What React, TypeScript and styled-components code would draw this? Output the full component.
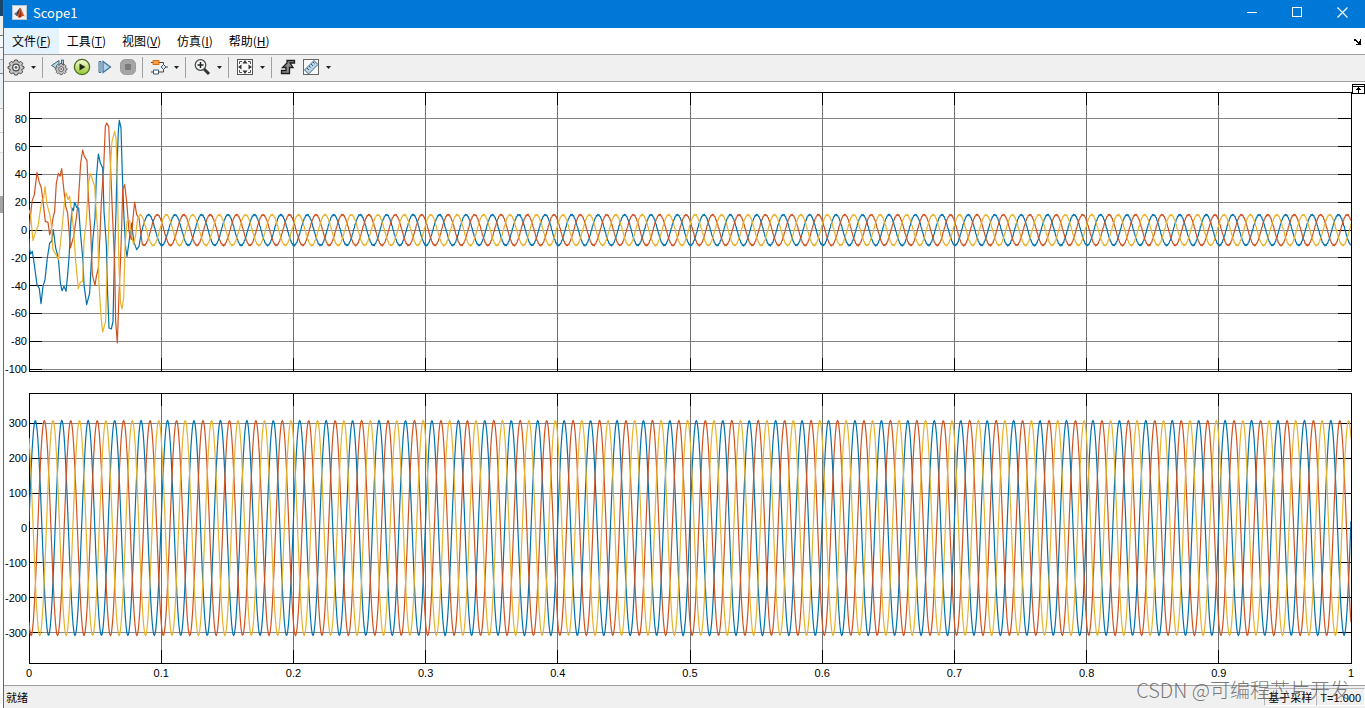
import React from "react";
import styled, { createGlobalStyle } from "styled-components";

const GlobalStyle = createGlobalStyle`
  * { box-sizing: border-box; }
  body { margin: 0; background: #fff; }
  button { font: inherit; color: inherit; border: 0; padding: 0; background: transparent; }
`;

const Desktop = styled.div`
  display: flex;
  min-height: 100vh;
  font-family: "Noto Sans CJK SC", sans-serif;
  font-size: 12px;
  color: #000;
`;

const Backdrop = styled.div`
  display: flex;
  flex-direction: column;
  flex: none;
  width: 3px;
  background: #fdfdfd;
`;

const BackdropBand = styled.div<{ $height: number; $color: string; $line?: string }>`
  height: ${(p) => p.$height}px;
  background: ${(p) => p.$color};
  border-bottom: ${(p) => (p.$line ? `1px solid ${p.$line}` : "0")};
`;

const Window = styled.div`
  display: flex;
  flex-direction: column;
  flex: 1;
  min-width: 0;
  background: #fff;
  border-left: 1px solid #1a7cb8;
`;

const TitleBar = styled.header`
  display: flex;
  align-items: center;
  height: 28px;
  padding-left: 8px;
  background: #0078d7;
  color: #fff;
`;

const Title = styled.h1`
  flex: 1;
  margin: 0 0 3px 6px;
  font-size: 13px;
  font-weight: 400;
  line-height: 18px;
`;

const CaptionButton = styled.button`
  display: flex;
  align-items: center;
  justify-content: center;
  width: 45px;
  height: 28px;
  padding-bottom: 3px;
`;

const AppIcon = styled.svg`
  width: 15px;
  height: 15px;
  margin-bottom: 3px;
`;

const MenuBar = styled.nav`
  display: flex;
  height: 27px;
  border-bottom: 1px solid #a0a0a0;
`;

const MenuButton = styled.button<{ $active?: boolean }>`
  padding: 0 8px;
  line-height: 26px;
  background: ${(p) => (p.$active ? "#e5f3ff" : "transparent")};
`;

const DockButton = styled.button`
  display: flex;
  align-items: center;
  margin-left: auto;
  padding-right: 3px;
`;

const Toolbar = styled.div`
  display: flex;
  align-items: center;
  height: 27px;
  padding-bottom: 2px;
  background: #f0f0f0;
  border-bottom: 1px solid #a0a0a0;
`;

const ToolButton = styled.button`
  display: flex;
  align-items: center;
  justify-content: center;
  width: 23px;
  height: 24px;
`;

const DropButton = styled(ToolButton)`
  width: 12px;
`;

const Separator = styled.span`
  width: 1px;
  height: 21px;
  margin: 0 4px 0 3px;
  background: #a0a0a0;
`;

const Plots = styled.main`
  position: relative;
  display: flex;
  flex-direction: column;
  flex: 1;
  gap: 22px;
  padding: 10px 14px 22px 25px;
`;

const PlotFrame = styled.figure<{ $share: number }>`
  display: flex;
  flex: ${(p) => p.$share} 1 0;
  min-height: 120px;
  margin: 0;
`;

const PlotSvg = styled.svg`
  flex: 1;
  width: 100%;
  height: auto;
  overflow: visible;
  shape-rendering: crispEdges;
  font-family: "Liberation Sans", sans-serif;
  font-size: 11px;
`;

const ExpandButton = styled.button`
  position: absolute;
  top: 2px;
  right: 0;
  display: flex;
`;

const StatusBar = styled.footer`
  position: relative;
  display: flex;
  align-items: center;
  height: 23px;
  padding-left: 2px;
  background: #f0f0f0;
  border-top: 1px solid #a0a0a0;
  font-family: "Liberation Sans", "Noto Sans CJK SC", sans-serif;
  font-size: 11px;
`;

const StatusText = styled.span`
  flex: 1;
`;

const StatusCell = styled.span`
  height: 18px;
  padding: 0 3px;
  line-height: 18px;
  border: 1px solid #fff;
  border-left-color: #b4b4b4;
  border-top-color: #b4b4b4;
`;

const Watermark = styled.span`
  position: absolute;
  right: 15px;
  bottom: 8px;
  font-family: "Noto Sans CJK SC", sans-serif;
  font-weight: 300;
  font-size: 20px;
  line-height: 20px;
  color: rgba(80, 80, 80, 0.75);
  pointer-events: none;
`;

const BLUE = "#0072ad";
const RED = "#d0531f";
const YELLOW = "#e8b22c";

const VIEW_WIDTH = 3966;
const VIEW_HEIGHT = 837;
const CYCLE = VIEW_WIDTH / 50;

type Point = [number, number];

interface Trace {
  color: string;
  points: Point[];
}

interface Axis {
  min: number;
  max: number;
  ticks: number[];
}

const currentAxis: Axis = {
  min: -101.4,
  max: 99.3,
  ticks: [80, 60, 40, 20, 0, -20, -40, -60, -80, -100],
};

const voltageAxis: Axis = {
  min: -386.8,
  max: 386.8,
  ticks: [300, 200, 100, 0, -100, -200, -300],
};

const toY = (value: number, axis: Axis) =>
  ((axis.max - value) / (axis.max - axis.min)) * VIEW_HEIGHT;

const sine = (axis: Axis, amplitude: number, peak: number, from: number, ripple: number): Point[] => {
  const points: Point[] = [];
  for (let x = from, i = 0; x <= VIEW_WIDTH; x += 2, i += 1) {
    const angle = ((x - peak) / CYCLE) * 2 * Math.PI;
    const value = amplitude * Math.cos(angle) + (i % 2 ? ripple : -ripple);
    points.push([x, Math.round(toY(value, axis))]);
  }
  return points;
};

const startBlue: Point[] = [
  [0, 440], [2, 473], [5, 486], [10, 478], [16, 518], [24, 578], [31, 590], [36, 635], [42, 583],
  [48, 563], [55, 498], [62, 453], [68, 448], [73, 413], [80, 468], [88, 498], [94, 573], [99, 596],
  [105, 583], [111, 598], [116, 548], [120, 498], [125, 403], [129, 348], [133, 356], [137, 331],
  [143, 346], [149, 348], [154, 418], [162, 508], [165, 578], [169, 608], [173, 638], [182, 603],
  [187, 508], [192, 438], [198, 378], [202, 258], [208, 186], [214, 213], [221, 228], [225, 358],
  [232, 458], [236, 608], [240, 708], [247, 711], [252, 688], [256, 508], [261, 358], [264, 228],
  [268, 118], [271, 85], [276, 108], [280, 248], [285, 378], [290, 468], [294, 493], [299, 458],
  [303, 428], [308, 393], [314, 448], [323, 473], [330, 463],
];

const startRed: Point[] = [
  [0, 415], [9, 328], [16, 308], [24, 241], [30, 268], [37, 288], [42, 328], [49, 388], [57, 391],
  [62, 428], [67, 413], [72, 378], [77, 358], [82, 273], [88, 244], [93, 253], [98, 230], [104, 288],
  [110, 343], [116, 363], [120, 415], [124, 468], [134, 433], [142, 378], [148, 328], [155, 213],
  [161, 174], [166, 193], [174, 206], [179, 328], [185, 415], [190, 548], [198, 580], [202, 553],
  [208, 528], [213, 428], [217, 328], [224, 228], [229, 103], [233, 93], [239, 103], [244, 208],
  [250, 358], [257, 518], [260, 688], [265, 753], [270, 608], [274, 518], [278, 408], [281, 293],
  [287, 278], [293, 328], [300, 418], [307, 443], [312, 378], [317, 330], [323, 368], [330, 378],
  [336, 428],
];

const startYellow: Point[] = [
  [0, 353], [5, 373], [12, 446], [20, 418], [27, 403], [32, 368], [39, 323], [44, 318], [48, 283],
  [54, 338], [62, 366], [67, 398], [72, 473], [82, 490], [88, 503], [94, 458], [102, 378], [107, 323],
  [112, 303], [117, 323], [122, 313], [128, 358], [134, 415], [140, 508], [148, 590], [154, 570],
  [161, 568], [165, 448], [172, 388], [178, 278], [184, 244], [189, 258], [197, 283], [201, 348],
  [206, 415], [210, 578], [216, 673], [221, 720], [230, 688], [234, 528], [239, 415], [244, 228],
  [249, 148], [257, 118], [261, 138], [264, 218], [270, 528], [275, 633], [279, 651], [284, 618],
  [288, 468], [294, 388], [302, 386], [307, 428], [314, 458], [320, 428], [326, 378],
];

const currentTraces: Trace[] = [
  { color: BLUE, points: [...startBlue, ...sine(currentAxis, 11, 359, 336, 0.4)] },
  { color: RED, points: [...startRed, ...sine(currentAxis, 11, 385, 340, 0.4)] },
  { color: YELLOW, points: [...startYellow, ...sine(currentAxis, 11, 412, 332, 0.4)] },
];

const voltageTraces: Trace[] = [
  { color: BLUE, points: sine(voltageAxis, 308, 19, 0, 0) },
  { color: RED, points: sine(voltageAxis, 308, 46, 0, 0) },
  { color: YELLOW, points: sine(voltageAxis, 308, 72, 0, 0) },
];

const timeTicks = [0, 0.1, 0.2, 0.3, 0.4, 0.5, 0.6, 0.7, 0.8, 0.9, 1];

const percentY = (value: number, axis: Axis) => `${((axis.max - value) / (axis.max - axis.min)) * 100}%`;

interface PlotProps {
  label: string;
  axis: Axis;
  traces: Trace[];
  share: number;
  showTime?: boolean;
}

const Plot = ({ label, axis, traces, share, showTime }: PlotProps) => (
  <PlotFrame $share={share} aria-label={label}>
    <PlotSvg>
      {axis.ticks.map((v) => (
        <line key={v} x1="0" x2="100%" y1={percentY(v, axis)} y2={percentY(v, axis)} stroke="#858585" />
      ))}
      {timeTicks.map((t) => (
        <line key={t} y1="0" y2="100%" x1={`${t * 100}%`} x2={`${t * 100}%`} stroke="#707070" />
      ))}
      <rect width="100%" height="100%" fill="none" stroke="#000" />
      {axis.ticks.map((v) => (
        <g key={v}>
          <svg y={percentY(v, axis)} overflow="visible">
            <line x1="0" x2="13" stroke="#000" />
            <text x="-2" y="4" textAnchor="end">{v}</text>
          </svg>
          <svg x="100%" y={percentY(v, axis)} overflow="visible">
            <line x1="-13" x2="0" stroke="#000" />
          </svg>
        </g>
      ))}
      {timeTicks.map((t) => (
        <g key={t}>
          <svg x={`${t * 100}%`} overflow="visible">
            <line y1="0" y2="13" stroke="#000" />
          </svg>
          <svg x={`${t * 100}%`} y="100%" overflow="visible">
            <line y1="-13" y2="0" stroke="#000" />
            {showTime && <text y="14" textAnchor="middle">{t}</text>}
          </svg>
        </g>
      ))}
      <svg width="100%" height="100%" viewBox={`0 0 ${VIEW_WIDTH} ${VIEW_HEIGHT}`} preserveAspectRatio="none">
        {traces.map((trace) => (
          <polyline
            key={trace.color}
            points={trace.points.map((p) => p.join(",")).join(" ")}
            fill="none"
            stroke={trace.color}
            strokeWidth="1.2"
            strokeLinejoin="round"
            shapeRendering="geometricPrecision"
            vectorEffect="non-scaling-stroke"
          />
        ))}
      </svg>
    </PlotSvg>
  </PlotFrame>
);

const Icon = ({ children }: { children: React.ReactNode }) => (
  <svg width="18" height="18" viewBox="0 0 18 18" fill="none" aria-hidden="true">{children}</svg>
);

const Drop = ({ label }: { label: string }) => (
  <DropButton aria-label={label}>
    <svg width="5" height="3" viewBox="0 0 5 3" aria-hidden="true"><path d="M0 0h5L2.5 3z" fill="#222" /></svg>
  </DropButton>
);

const GearShape = () => (
  <>
    <path
      d="M7.6 2h2.8l.5 1.8 1.2.5 1.7-.9 1.9 1.9-.9 1.7.5 1.2 1.7.5v1.8l-1.7.5-.5 1.2.9 1.7-1.9 1.9-1.7-.9-1.2.5-.5 1.6H7.6l-.5-1.6-1.2-.5-1.7.9-1.9-1.9.9-1.7-.5-1.2L1 10.5V8.700l1.700-.5.5-1.200-.9-1.700 1.900-1.900 1.700.9 1.200-.5z"
      fill="#c4c4c4"
      stroke="#484848"
    />
    <circle cx="9" cy="9.5" r="3.3" fill="#f4f4f4" stroke="#484848" strokeWidth="1.2" />
    <circle cx="9" cy="9.5" r="1.4" fill="#666" />
  </>
);

const App = () => (
  <>
    <GlobalStyle />
    <Desktop>
      <Backdrop>
        <BackdropBand $height={16} $color="#17456f" />
        <BackdropBand $height={20} $color="#f0f0f0" $line="#777" />
        <BackdropBand $height={12} $color="#f4f8fb" $line="#888" />
        <BackdropBand $height={12} $color="#f4f4f4" $line="#aaa" />
        <BackdropBand $height={14} $color="#e0e8ee" $line="#789" />
        <BackdropBand $height={35} $color="#eef1f3" $line="#bbb" />
        <BackdropBand $height={24} $color="#f7f7f7" $line="#ccc" />
        <BackdropBand $height={20} $color="#fafafa" $line="#ddd" />
        <BackdropBand $height={43} $color="#f4f4f4" />
        <BackdropBand $height={17} $color="#a4a4a4" />
      </Backdrop>
      <Window>
        <TitleBar>
          <AppIcon viewBox="0 0 15 15" aria-hidden="true">
            <rect x="0.5" y="0.5" width="14" height="14" fill="#eef1f4" stroke="#b9c8d4" />
            <path d="M2 8.5L5 7l3-4 -1.5 6.5L4.5 11z" fill="#3e7fa8" />
            <path d="M5 7l3-4.5L7 10l-2.5 1z" fill="#6b2a24" />
            <path d="M8 2.5c1.5 1 2.5 5.5 5 9-1.5-.7-2.5-.7-3.5.5C8.5 12.7 7.5 13 6.5 12.5 6 11.5 5.5 11 4.5 11 7 9.5 7 5 8 2.5z" fill="#d9541e" />
            <path d="M8 2.5c.5 3 .5 6-1.5 10 1.5 0 2.5-1 3-2z" fill="#8c2b17" />
          </AppIcon>
          <Title>Scope1</Title>
          <CaptionButton aria-label="最小化">
            <svg width="11" height="11" shapeRendering="crispEdges"><path d="M0 5h10v1H0z" fill="#fff" /></svg>
          </CaptionButton>
          <CaptionButton aria-label="最大化">
            <svg width="11" height="11" shapeRendering="crispEdges"><path d="M.5 .5h9v9h-9z" fill="none" stroke="#fff" /></svg>
          </CaptionButton>
          <CaptionButton aria-label="关闭">
            <svg width="11" height="11"><path d="M.5 .5l10 10M10.5 .5l-10 10" stroke="#fff" strokeWidth="1.2" /></svg>
          </CaptionButton>
        </TitleBar>

        <MenuBar>
          <MenuButton $active>文件(<u>F</u>)</MenuButton>
          <MenuButton>工具(<u>T</u>)</MenuButton>
          <MenuButton>视图(<u>V</u>)</MenuButton>
          <MenuButton>仿真(<u>I</u>)</MenuButton>
          <MenuButton>帮助(<u>H</u>)</MenuButton>
          <DockButton aria-label="停靠">
            <svg width="8" height="7" viewBox="0 0 8 7" aria-hidden="true">
              <path d="M0 1h2v1h1v1h1v1h1V3h1V1h1v6H2V6h2V5H3V4H2V3H0z" fill="#000" shapeRendering="crispEdges" />
            </svg>
          </DockButton>
        </MenuBar>

        <Toolbar role="toolbar" aria-label="示波器">
          <ToolButton aria-label="配置属性"><Icon><GearShape /></Icon></ToolButton>
          <Drop label="配置选项" />
          <Separator />
          <ToolButton aria-label="步退选项">
            <Icon>
              <path d="M1.5 7.500L9 2.500v9.500z" fill="#b9d5e8" stroke="#3d6580" />
              <path d="M11.500 2h2v5h-2z" fill="#b9d5e8" stroke="#3d6580" />
              <g transform="translate(4.5 4) scale(.74)"><GearShape /></g>
            </Icon>
          </ToolButton>
          <ToolButton aria-label="运行">
            <Icon>
              <defs>
                <linearGradient id="run" x1="0" y1="0" x2="0" y2="1">
                  <stop offset="0" stopColor="#f8fdd8" />
                  <stop offset="1" stopColor="#94c82e" />
                </linearGradient>
              </defs>
              <circle cx="9" cy="9" r="7.6" fill="url(#run)" stroke="#4d6b22" strokeWidth="1.3" />
              <path d="M6.5 5.5l6 3.5-6 3.5z" fill="#1e2b12" />
            </Icon>
          </ToolButton>
          <ToolButton aria-label="步进">
            <Icon>
              <path d="M3 3.5h2v11H3z" fill="#cfe4f2" stroke="#3c7196" />
              <path d="M7 3.5v11L14.500 9z" fill="#b4d4ea" stroke="#3c7196" strokeWidth="1.2" />
            </Icon>
          </ToolButton>
          <ToolButton aria-label="停止">
            <Icon>
              <rect x="1.5" y="1.5" width="15" height="15" rx="5" fill="#a5a5a5" stroke="#989898" />
              <rect x="6" y="6" width="6" height="6" fill="#7b7b7b" />
            </Icon>
          </ToolButton>
          <Separator />
          <ToolButton aria-label="突出显示模块">
            <Icon>
              <path d="M1 4.5h2M9 4.500h4.500V7M13.500 11v3H9M1 14h2M15.500 9H18" stroke="#444" />
              <path d="M3 2.500h6v4H3z" fill="#f9a03f" stroke="#d86c16" />
              <path d="M3.500 12h5v4h-5z" fill="#fff" stroke="#3c5568" />
              <path d="M11 9l2.500-2.500L16 9l-2.500 2.500z" fill="#d5e7f3" stroke="#3c5568" />
            </Icon>
          </ToolButton>
          <Drop label="突出显示选项" />
          <Separator />
          <ToolButton aria-label="放大">
            <Icon>
              <path d="M11 11l5 5" stroke="#333" strokeWidth="3" />
              <circle cx="7.5" cy="7" r="5.3" fill="#f3f7f9" stroke="#444" strokeWidth="1.2" />
              <path d="M4.5 7h6M7.5 4v6" stroke="#222" strokeWidth="1.5" />
            </Icon>
          </ToolButton>
          <Drop label="缩放选项" />
          <Separator />
          <ToolButton aria-label="缩放至适合">
            <Icon>
              <rect x="1.5" y="1.5" width="15" height="15" fill="#fafafa" stroke="#555" />
              <path d="M9 2l2.500 3.500h-5zM9 16l-2.500-3.500h5zM2 9l3.500-2.500v5zM16 9l-3.500 2.500v-5z" fill="#333" />
              <path d="M3.500 6V3.500H6M12 3.500h2.500V6M14.500 12v2.500H12M6 14.500H3.500V12" stroke="#555" />
            </Icon>
          </ToolButton>
          <Drop label="适合选项" />
          <Separator />
          <ToolButton aria-label="触发器">
            <Icon>
              <path d="M2.500 12.500h4.500V9.500H3.500L8 5V2.500h7.500v2.500h-4.500L14 9.500h-3.500v6H2.500z" fill="#8a8a8a" stroke="#1c1c1c" strokeWidth="1.3" />
            </Icon>
          </ToolButton>
          <ToolButton aria-label="测量">
            <Icon>
              <rect x="1.5" y="1.5" width="15" height="15" fill="#f8f8f8" stroke="#666" />
              <path d="M2.500 12L12 2.500 16 6.500 6.500 16z" fill="#b7d3e4" stroke="#476b82" />
              <path d="M5 10l2 2M7 8l1.500 1.500M9 6l2 2M11 4l1.500 1.500" stroke="#355a72" />
            </Icon>
          </ToolButton>
          <Drop label="测量选项" />
        </Toolbar>

        <Plots>
          <Plot label="电流" axis={currentAxis} traces={currentTraces} share={279} />
          <Plot label="电压" axis={voltageAxis} traces={voltageTraces} share={270} showTime />
          <ExpandButton aria-label="最大化坐标区">
            <svg width="13" height="10" viewBox="0 0 13 10" shapeRendering="crispEdges" aria-hidden="true">
              <path d="M.5 .5h12v9H.5z" fill="#fff" stroke="#000" />
              <path d="M1 2h11v1H1zM6 3h1v6H6zM5 4h3v1H5zM4 5h5v1H4z" fill="#000" />
            </svg>
          </ExpandButton>
        </Plots>

        <StatusBar>
          <StatusText>就绪</StatusText>
          <StatusCell>基于采样</StatusCell>
          <StatusCell>T=1.000</StatusCell>
          <Watermark>CSDN @可编程芯片开发</Watermark>
        </StatusBar>
      </Window>
    </Desktop>
  </>
);

export default App;
